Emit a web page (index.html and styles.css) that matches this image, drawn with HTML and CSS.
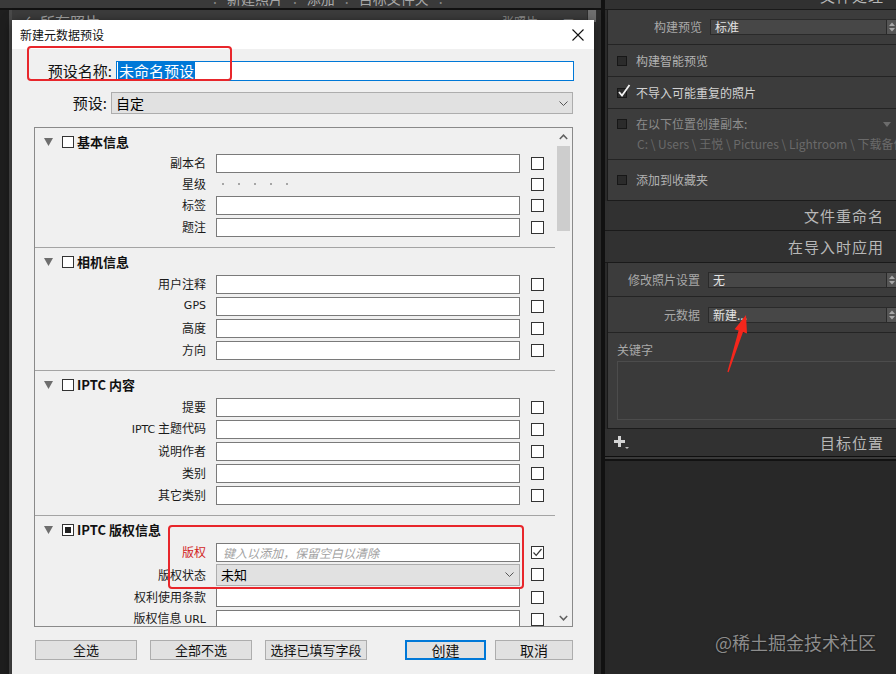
FILE: index.html
```html
<!DOCTYPE html>
<html lang="zh-CN">
<head>
<meta charset="utf-8">
<title>新建元数据预设</title>
<link rel="stylesheet" href="styles.css">
</head>
<body>
<div class="app">
  <div class="main">
    <div class="toolbar">
      <span class="tsep">:</span><span class="ttext">新建照片</span><span class="tsep">:</span><span class="ttext">添加</span><span class="tsep">:</span><span class="ttext">目标文件夹</span><span class="tsep">:</span>
    </div>
    <div class="tbline"></div>
    <div class="mainrow">
      <div class="leftstrip"></div>
      <div class="gridcol">
        <div class="gridhead"><span class="ghcheck">✓</span><span class="ghtitle">所有照片</span><span class="ghcount">— 张照片</span><span class="ghsort">≡</span></div>
      </div>
      <div class="vscroll"><div class="vthumb"></div></div>
    </div>
  </div>
  <div class="divider"></div>
  <aside class="right">
    <div class="rhead rhead-top"><span>文件处理</span></div>
    <div class="rbox">
      <div class="rrow r35">
        <span class="rlabel rlabel-a">构建预览</span>
        <div class="rselect"><span class="rselval">标准</span><span class="spin"><svg width="8" height="12" viewBox="0 0 8 12"><polygon points="1,5 4,1.5 7,5" fill="#a8a8a8"/><polygon points="1,7 4,10.5 7,7" fill="#a8a8a8"/></svg></span></div>
      </div>
      <div class="rrow rcheck r32"><span class="rcb"></span><span class="rtext">构建智能预览</span></div>
      <div class="rrow rcheck r32"><span class="rcb"><svg class="rtick" width="14" height="14" viewBox="0 0 14 14"><polyline points="2,8 5,11.5 12.5,1" fill="none" stroke="#f2f2f2" stroke-width="1.8"/></svg></span><span class="rtext rtext-on">不导入可能重复的照片</span></div>
      <div class="rrow rcopy r51">
        <div class="copyline"><span class="rcb"></span><span class="rtext rtext-dim">在以下位置创建副本:</span><span class="copytri"><svg width="8" height="5" viewBox="0 0 8 5"><polygon points="0,0 8,0 4,5" fill="#6c6c6c"/></svg></span></div>
        <div class="copypath">C: \ Users \ 王悦 \ Pictures \ Lightroom \ 下载备份</div>
      </div>
      <div class="rrow rcheck r40"><span class="rcb"></span><span class="rtext">添加到收藏夹</span></div>
    </div>
    <div class="rhead rhead-rename"><span>文件重命名</span></div>
    <div class="rhead rhead-apply"><span>在导入时应用</span></div>
    <div class="rbox">
      <div class="rrow r34">
        <span class="rlabel rlabel-b">修改照片设置</span>
        <div class="rselect"><span class="rselval">无</span><span class="spin"><svg width="8" height="12" viewBox="0 0 8 12"><polygon points="1,5 4,1.5 7,5" fill="#a8a8a8"/><polygon points="1,7 4,10.5 7,7" fill="#a8a8a8"/></svg></span></div>
      </div>
      <div class="rrow r36">
        <span class="rlabel rlabel-b">元数据</span>
        <div class="rselect"><span class="rselval">新建...</span><span class="spin"><svg width="8" height="12" viewBox="0 0 8 12"><polygon points="1,5 4,1.5 7,5" fill="#a8a8a8"/><polygon points="1,7 4,10.5 7,7" fill="#a8a8a8"/></svg></span></div>
      </div>
      <div class="rrow rkeys">
        <span class="keylabel">关键字</span>
        <div class="keyarea"></div>
      </div>
    </div>
    <div class="rhead rhead-dest">
      <svg class="plus" width="17" height="15" viewBox="0 0 17 15"><path d="M5 1h3v4h4v3H8v4H5V8H1V5h4z" fill="#d4d4d4"/><polygon points="12,12 16,12 14,14" fill="#bdbdbd"/></svg>
      <span>目标位置</span>
    </div>
    <div class="dline"></div>
    <div class="rfill"></div>
  </aside>
</div>

<div class="dialog">
  <div class="dtitle">
    <span class="dtitle-text">新建元数据预设</span>
    <svg class="dclose" width="12" height="12" viewBox="0 0 12 12"><path d="M0.5 0.5L11.5 11.5M11.5 0.5L0.5 11.5" stroke="#111" stroke-width="1.1"/></svg>
  </div>
  <div class="dbody">
    <div class="namerow">
      <span class="namelabel">预设名称:</span>
      <div class="nameinput"><span class="sel">未命名预设</span></div>
    </div>
    <div class="presetrow">
      <span class="presetlabel">预设:</span>
      <div class="wselect presetselect"><span>自定</span><svg width="9" height="5" viewBox="0 0 9 5"><polyline points="0.5,0.5 4.5,4.5 8.5,0.5" fill="none" stroke="#555" stroke-width="1"/></svg></div>
    </div>

    <div class="panel">
      <div class="pcontent">
        <section class="sec sec-first">
          <div class="sechead sechead-first"><svg class="tri" width="9" height="8" viewBox="0 0 9 8"><polygon points="0,0 9,0 4.5,8" fill="#6e6e6e"/></svg><span class="scb"></span><span class="stitle">基本信息</span></div>
          <div class="frow"><span class="flabel">副本名</span><div class="finput"></div><span class="fcb"></span></div>
          <div class="frow frow-stars"><span class="flabel">星级</span><div class="stars"><i></i><i></i><i></i><i></i><i></i></div><span class="fcb"></span></div>
          <div class="frow"><span class="flabel">标签</span><div class="finput"></div><span class="fcb"></span></div>
          <div class="frow"><span class="flabel">题注</span><div class="finput"></div><span class="fcb"></span></div>
        </section>
        <section class="sec">
          <div class="sechead"><svg class="tri" width="9" height="8" viewBox="0 0 9 8"><polygon points="0,0 9,0 4.5,8" fill="#6e6e6e"/></svg><span class="scb"></span><span class="stitle">相机信息</span></div>
          <div class="frow"><span class="flabel">用户注释</span><div class="finput"></div><span class="fcb"></span></div>
          <div class="frow"><span class="flabel flabel-latin">GPS</span><div class="finput"></div><span class="fcb"></span></div>
          <div class="frow"><span class="flabel">高度</span><div class="finput"></div><span class="fcb"></span></div>
          <div class="frow"><span class="flabel">方向</span><div class="finput"></div><span class="fcb"></span></div>
        </section>
        <section class="sec">
          <div class="sechead"><svg class="tri" width="9" height="8" viewBox="0 0 9 8"><polygon points="0,0 9,0 4.5,8" fill="#6e6e6e"/></svg><span class="scb"></span><span class="stitle">IPTC 内容</span></div>
          <div class="frow"><span class="flabel">提要</span><div class="finput"></div><span class="fcb"></span></div>
          <div class="frow"><span class="flabel"><span class="latin">IPTC</span> 主题代码</span><div class="finput"></div><span class="fcb"></span></div>
          <div class="frow"><span class="flabel">说明作者</span><div class="finput"></div><span class="fcb"></span></div>
          <div class="frow"><span class="flabel">类别</span><div class="finput"></div><span class="fcb"></span></div>
          <div class="frow"><span class="flabel">其它类别</span><div class="finput"></div><span class="fcb"></span></div>
        </section>
        <section class="sec sec-last">
          <div class="sechead"><svg class="tri" width="9" height="8" viewBox="0 0 9 8"><polygon points="0,0 9,0 4.5,8" fill="#6e6e6e"/></svg><span class="scb scb-mixed"><i></i></span><span class="stitle">IPTC 版权信息</span></div>
          <div class="frow"><span class="flabel flabel-red">版权</span><div class="finput finput-ph">键入以添加，保留空白以清除</div><span class="fcb"><svg width="11" height="11" viewBox="0 0 11 11"><polyline points="1.5,5.5 4.2,8.3 9.5,2" fill="none" stroke="#333" stroke-width="1.2"/></svg></span></div>
          <div class="frow frow-select"><span class="flabel">版权状态</span><div class="wselect fselect"><span>未知</span><svg width="9" height="5" viewBox="0 0 9 5"><polyline points="0.5,0.5 4.5,4.5 8.5,0.5" fill="none" stroke="#555" stroke-width="1"/></svg></div><span class="fcb"></span></div>
          <div class="frow"><span class="flabel">权利使用条款</span><div class="finput"></div><span class="fcb"></span></div>
          <div class="frow"><span class="flabel">版权信息 <span class="latin">URL</span></span><div class="finput"></div><span class="fcb"></span></div>
        </section>
      </div>
      <div class="pscroll">
        <div class="sarrow"><svg width="9" height="6" viewBox="0 0 9 6"><polyline points="0.8,5 4.5,1.2 8.2,5" fill="none" stroke="#606060" stroke-width="1.5"/></svg></div>
        <div class="sthumb"></div>
        <div class="sspace"></div>
        <div class="sarrow"><svg width="9" height="6" viewBox="0 0 9 6"><polyline points="0.8,1 4.5,4.8 8.2,1" fill="none" stroke="#606060" stroke-width="1.5"/></svg></div>
      </div>
    </div>

    <div class="btnrow">
      <div class="btn btn-a">全选</div>
      <div class="btn btn-b">全部不选</div>
      <div class="btn btn-c">选择已填写字段</div>
      <div class="btn btn-primary">创建</div>
      <div class="btn btn-cancel">取消</div>
    </div>
  </div>
  <div class="redbox redbox-name"></div>
  <div class="redbox redbox-copy"></div>
</div>

<svg class="arrow" width="34" height="70" viewBox="0 0 34 70"><polygon points="24,7 25,25.5 21,24 6.6,64.2 5.4,63.8 16.6,22.5 12.6,21.2" fill="#f4261c"/></svg>
<div class="watermark">@稀土掘金技术社区</div>
</body>
</html>
```

FILE: styles.css
```css
* { box-sizing: border-box; margin: 0; padding: 0; }
html, body { width: 896px; height: 674px; overflow: hidden; }
body {
  position: relative;
  background: #272727;
  font-family: "Noto Sans CJK SC", "Noto Sans", sans-serif;
  font-size: 12px;
  line-height: 16px;
}

.app { display: flex; width: 896px; height: 674px; }

/* ---------- main (behind the dialog) ---------- */
.main { flex: none; width: 601px; display: flex; flex-direction: column; background: #2c2c2c; }
.toolbar {
  height: 8px; overflow: hidden; display: flex; align-items: flex-end;
  padding-left: 203px; background: #3a3a3a; color: #a8a8a8; font-size: 14px;
}
.toolbar span { line-height: 20px; }
.tsep { color: #888; margin: 0 10px; }
.tbline { height: 2px; background: #121212; }
.mainrow { flex: 1; display: flex; }
.leftstrip { flex: none; width: 12px; background: #1e1e1e; border-right: 3px solid #4a4a4a; }
.gridcol { flex: none; width: 575px; background: #2b2b2b; }
.gridhead {
  height: 10px; overflow: hidden; display: flex; align-items: flex-start;
  padding: 2px 12px 0 8px; background: #3c3c3c; color: #a6a6a6;
  font-size: 15px; line-height: 20px;
}
.ghcheck { width: 20px; }
.ghtitle { flex: 1; }
.ghcount { font-size: 12px; margin-right: 24px; color: #8e8e8e; }
.ghsort { font-size: 13px; color: #8e8e8e; }
.vscroll { flex: none; width: 10px; background: #2f2f2f; }
.vthumb { height: 12px; background: #707070; margin: 0 1px; }
.divider { flex: none; width: 4px; background: #121212; }

/* ---------- right panel ---------- */
.right {
  flex: 1; min-width: 0; overflow: hidden;
  display: flex; flex-direction: column; background: #2c2c2c;
  color: #b0b0b0; font-size: 12px; line-height: 16px;
}
.rhead {
  flex: none; display: flex; align-items: center; justify-content: flex-end;
  padding-right: 12px; background: #313131; border-bottom: 1px solid #1a1a1a;
  color: #b8b8b8; font-size: 15px; letter-spacing: 1px; line-height: 20px;
}
.rhead-top { height: 10px; overflow: hidden; align-items: flex-end; }
.rhead-top span { line-height: 26px; }
.rhead-rename { height: 30px; }
.rhead-apply { height: 32px; }
.rhead-dest { height: 27px; border-bottom: none; justify-content: space-between; padding-left: 8px; }
.plus { display: block; }

.rbox {
  flex: none; margin-left: 2px; background: #3c3c3c;
  border-left: 1px solid #1b1b1b; border-bottom: 1px solid #1b1b1b;
}
.rrow { display: flex; align-items: center; border-bottom: 1px solid #242424; }
.rrow:last-child { border-bottom: none; }
.r32 { height: 32px; } .r34 { height: 34px; } .r35 { height: 35px; }
.r36 { height: 36px; } .r40 { height: 40px; } .r51 { height: 51px; }

.rlabel { flex: none; text-align: right; color: #a9a9a9; white-space: nowrap; }
.rlabel-a { width: 94px; margin-right: 8px; }
.rlabel-b { width: 92px; margin-right: 8px; }
.rselect {
  flex: 1; min-width: 0; height: 16px; display: flex; align-items: center;
  background: #474747; border: 1px solid #2a2a2a; border-right: none;
  color: #e4e4e4; padding-left: 4px; line-height: 14px;
}
.rselval { flex: 1; }
.spin {
  width: 10px; height: 14px; display: flex; align-items: center; justify-content: center;
  background: #555; border-left: 1px solid #2a2a2a;
}
.spin svg { display: block; }

.rcheck { padding-left: 9px; }
.rcb {
  position: relative; flex: none; width: 10px; height: 10px;
  background: #2b2b2b; border: 1px solid #171717;
}
.rtick { position: absolute; left: -1px; top: -5px; }
.rtext { margin-left: 9px; color: #b2b2b2; white-space: nowrap; }
.rtext-on { color: #d2d2d2; }
.rtext-dim { color: #8c8c8c; }
.rcopy { flex-direction: column; align-items: stretch; padding: 6px 0 0 9px; }
.copyline { display: flex; align-items: center; height: 18px; }
.copytri { margin-left: auto; margin-right: 5px; display: flex; }
.copypath { margin-top: 3px; padding-left: 20px; color: #6a6a6a; line-height: 16px; white-space: nowrap; overflow: hidden; }

.rkeys { height: 95px; flex-direction: column; align-items: stretch; padding: 8px 0 8px 9px; }
.keylabel { line-height: 18px; color: #a9a9a9; }
.keyarea { margin-top: 2px; height: 59px; background: #3a3a3a; border: 1px solid #4c4c4c; border-right: none; }

.dline { flex: none; height: 5px; border-top: 1px solid #0f0f0f; border-bottom: 2px solid #121212; background: #3a3a3a; }
.rfill { flex: 1; background: #282828; }

/* ---------- dialog ---------- */
.dialog {
  position: absolute; left: 12px; top: 20px; width: 582px; height: 664px;
  background: #f0f0f0; color: #000;
  font-family: "Noto Sans CJK SC", "Noto Sans", sans-serif;
  font-size: 12px; line-height: 16px;
  box-shadow: 0 2px 10px rgba(0, 0, 0, 0.55);
}
.dtitle {
  height: 29px; background: #fff; display: flex; align-items: center;
  justify-content: space-between; padding: 0 10px 0 8px;
}
.dtitle-text { font-size: 12px; color: #111; }
.dclose { display: block; }
.dbody { padding: 12px 20px 0 22px; display: flex; flex-direction: column; }

.namerow { display: flex; align-items: center; height: 20px; }
.namelabel { flex: none; width: 78px; margin-right: 4px; text-align: right; font-size: 15px; white-space: nowrap; color: #111; }
.nameinput {
  flex: 1; height: 20px; border: 1px solid #0078d7; background: #fff;
  display: flex; align-items: center; padding-left: 1px;
}
.sel { background: #0078d7; color: #fff; font-size: 15px; line-height: 18px; padding: 0 1px; }

.presetrow { display: flex; align-items: center; height: 22px; margin-top: 11px; }
.presetlabel { flex: none; width: 73px; margin-right: 4px; text-align: right; font-size: 15px; color: #111; white-space: nowrap; }
.wselect {
  display: flex; align-items: center; justify-content: space-between;
  background: #e1e1e1; border: 1px solid #adadad; padding: 0 4px 0 4px;
}
.wselect svg { display: block; }
.presetselect { flex: 1; height: 22px; margin-right: 1px; font-size: 14px; }

.panel {
  margin-top: 13px; margin-right: 1px; height: 500px;
  border: 1px solid #8a8a8a; display: flex; background: #f0f0f0;
}
.pcontent { flex: 1; overflow: hidden; }
.sec { border-bottom: 1px solid #a4a4a4; padding-bottom: 9px; }
.sec-last { border-bottom: none; }
.sechead { height: 25px; display: flex; align-items: center; padding: 3px 0 0 9px; }
.sechead-first { height: 24px; padding-top: 4px; }
.tri { display: block; flex: none; }
.scb {
  flex: none; margin-left: 9px; width: 12px; height: 12px;
  border: 1px solid #333; background: #fff;
  display: flex; align-items: center; justify-content: center;
}
.scb-mixed i { display: block; width: 6px; height: 6px; background: #222; }
.stitle { margin-left: 3px; font-weight: bold; font-size: 13px; line-height: 18px; color: #111; }

.frow { height: 22px; display: flex; align-items: center; }
.frow-stars { height: 20px; }
.frow-select { height: 23px; }
.flabel { flex: none; width: 171px; text-align: right; white-space: nowrap; color: #1a1a1a; }
.flabel-latin, .latin { font-family: "DejaVu Sans", "Liberation Sans", sans-serif; font-size: 11px; }
.flabel-red { color: #d21f1f; }
.finput {
  flex: none; margin-left: 10px; width: 304px; height: 19px;
  border: 1px solid #7a7a7a; background: #fff;
}
.finput-ph {
  padding-left: 6px; font-style: italic; color: #a2a2a2; font-size: 12px; line-height: 17px;
}
.fselect { flex: none; margin-left: 10px; width: 304px; height: 22px; font-size: 13px; padding-right: 5px; }
.stars { flex: none; margin-left: 10px; width: 304px; display: flex; align-items: center; gap: 14px; padding-left: 6px; }
.stars i { display: block; width: 2px; height: 2px; background: #a6a6a6; }
.fcb {
  flex: none; margin-left: 11px; width: 13px; height: 13px;
  border: 1px solid #333; background: #fff;
  display: flex; align-items: center; justify-content: center;
}
.fcb svg { display: block; }

.pscroll { flex: none; width: 17px; display: flex; flex-direction: column; align-items: stretch; }
.sarrow { height: 17px; display: flex; align-items: center; justify-content: center; }
.sarrow svg { display: block; }
.sthumb { height: 85px; margin: 1px 2px 0 2px; background: #cdcdcd; }
.sspace { flex: 1; }

.btnrow { display: flex; margin-top: 13px; height: 20px; }
.btn {
  flex: none; height: 20px; display: flex; align-items: center; justify-content: center;
  background: #e1e1e1; border: 1px solid #adadad; font-size: 13px; color: #111;
}
.btn-a { width: 102px; margin-left: 1px; }
.btn-b { width: 102px; margin-left: 13px; }
.btn-c { width: 102px; margin-left: 13px; }
.btn-primary { width: 81px; margin-left: 38px; border: 2px solid #0078d7; font-size: 14px; }
.btn-cancel { width: 78px; margin-left: 9px; font-size: 14px; }

.redbox { position: absolute; border: 2.5px solid #e8262b; border-radius: 4px; }
.redbox-name { left: 15px; top: 26px; width: 205px; height: 35px; }
.redbox-copy { left: 156px; top: 505px; width: 356px; height: 64px; }

/* ---------- annotations ---------- */
.arrow { position: absolute; left: 722px; top: 308px; display: block; }
.watermark {
  position: absolute; left: 715px; top: 630px;
  font-size: 18px; line-height: 24px; color: #8d8d8d;
  text-shadow: 0 0 2px #111;
}
```
